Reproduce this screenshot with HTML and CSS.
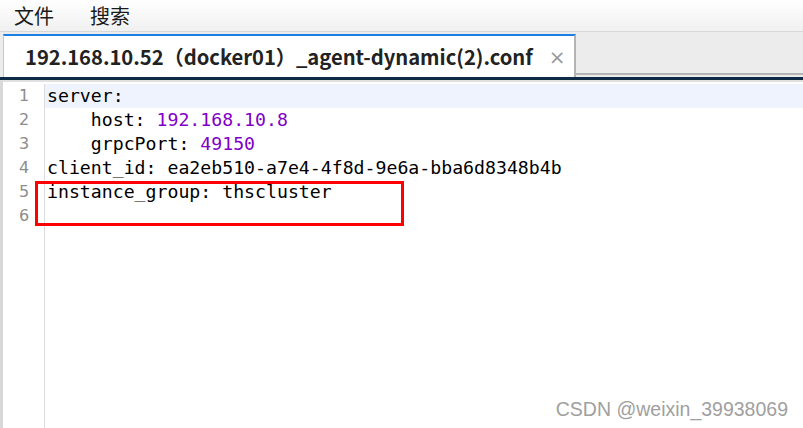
FILE: index.html
```html
<!DOCTYPE html>
<html lang="zh">
<head>
<meta charset="utf-8">
<title>agent-dynamic(2).conf</title>
<link rel="stylesheet" href="styles.css">
</head>
<body>
<div class="app">
  <div class="menubar">
    <span class="menu-item">文件</span>
    <span class="menu-item">搜索</span>
  </div>
  <div class="tabbar">
    <div class="tab active">
      <span class="tab-title">192.168.10.52（docker01）_agent-dynamic(2).conf</span>
      <span class="tab-close">×</span>
    </div>
    <div class="tab-rest"></div>
  </div>
  <div class="navline"></div>
  <div class="editor">
    <div class="gutter">
      <div class="ln">1</div>
      <div class="ln">2</div>
      <div class="ln">3</div>
      <div class="ln">4</div>
      <div class="ln">5</div>
      <div class="ln">6</div>
    </div>
    <div class="code">
      <div class="line current">server:</div>
      <div class="line">    host: <span class="val">192.168.10.8</span></div>
      <div class="line">    grpcPort: <span class="val">49150</span></div>
      <div class="line">client_id: ea2eb510-a7e4-4f8d-9e6a-bba6d8348b4b</div>
      <div class="line">instance_group: thscluster</div>
      <div class="line"></div>
      <div class="mark"></div>
    </div>
  </div>
  <div class="watermark">CSDN @weixin_39938069</div>
</div>
</body>
</html>
```

FILE: styles.css
```css
html, body {
  margin: 0;
  padding: 0;
  background: #ffffff;
}
.app {
  position: relative;
  width: 803px;
  height: 428px;
  overflow: hidden;
  display: flex;
  flex-direction: column;
}
.menubar {
  height: 32px;
  box-sizing: border-box;
  border-bottom: 1px solid #d8d8d8;
  background: linear-gradient(#ffffff, #f0f0f0);
  display: flex;
  align-items: center;
  padding-left: 14px;
  gap: 36px;
  font-family: "Noto Sans CJK SC", sans-serif;
  font-size: 20px;
  color: #1a1a1a;
}
.menu-item {
  line-height: 32px;
  padding-top: 1px;
}
.tabbar {
  height: 45px;
  display: flex;
  background: #ececec;
  padding-top: 2px;
  box-sizing: border-box;
  padding-left: 3px;
}
.tab.active {
  width: 573px;
  box-sizing: border-box;
  background: #ffffff;
  border-top: 2px solid #1a80e6;
  border-left: 1px solid #c8c8c8;
  border-right: 2px solid #b4b4b4;
  display: flex;
  align-items: center;
  padding-left: 21px;
  font-family: "Noto Sans CJK SC", "Noto Sans", sans-serif;
  font-weight: bold;
  font-size: 20.2px;
  color: #222222;
}
.tab-title {
  white-space: pre;
  letter-spacing: -0.02px;
}
.tab-close {
  margin-left: 16px;
  font-weight: normal;
  font-family: "DejaVu Sans", sans-serif;
  font-size: 20px;
  color: #999999;
}
.tab-rest {
  flex: 1;
  border-bottom: 2px solid #b4b4b4;
  margin-bottom: 2px;
}
.navline {
  height: 3px;
  background: #0d2b44;
}
.editor {
  flex: 1;
  display: flex;
  border-top: 2px solid #e0e0e0;
  border-left: 3px solid #d8d8d8;
  padding-top: 2px;
  background: #ffffff;
}
.gutter {
  width: 41px;
  border-right: 1px solid #dcdcdc;
  font-family: "DejaVu Sans", sans-serif;
  font-size: 16px;
  color: #8c8c8c;
}
.ln {
  height: 24px;
  line-height: 24px;
  padding-left: 16px;
}
.code {
  position: relative;
  flex: 1;
  font-family: "DejaVu Sans Mono", monospace;
  font-size: 18.2px;
  color: #000000;
}
.line {
  height: 24px;
  line-height: 24px;
  white-space: pre;
  padding-left: 2px;
}
.line.current {
  background: #eff3fd;
}
.val {
  color: #8000c8;
}
.mark {
  position: absolute;
  left: -10px;
  top: 97px;
  width: 369px;
  height: 45px;
  box-sizing: border-box;
  border: 3px solid #ff0000;
}
.watermark {
  position: absolute;
  right: 15px;
  bottom: 7px;
  font-family: "Liberation Sans", Arial, sans-serif;
  font-size: 19.5px;
  color: #a0a0a0;
  text-shadow: 0 0 1px #ffffff;
}
```
